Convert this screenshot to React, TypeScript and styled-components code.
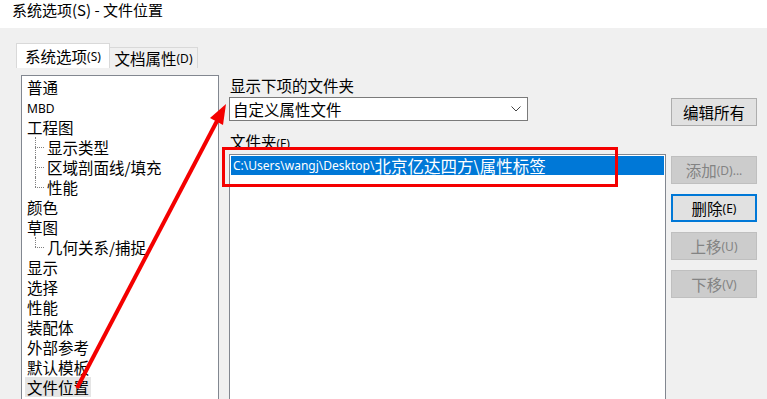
import styled, { createGlobalStyle } from "styled-components";

const GlobalStyle = createGlobalStyle`
  html, body {
    margin: 0;
    padding: 0;
    background: #f0f0f0;
    overflow: hidden;
  }
  body {
    font-family: "Noto Sans CJK SC", "Noto Sans", sans-serif;
    color: #000;
  }
`;

const Window = styled.div`
  position: relative;
  width: 767px;
  height: 399px;
  overflow: hidden;
  background: #f0f0f0;
`;

const TitleBar = styled.div`
  height: 28px;
  background: #fff;
  padding-left: 12px;
  font-size: 15px;
  line-height: 20px;
  box-sizing: border-box;
`;

const Body = styled.div`
  padding: 15px 0 0 16px;
`;

const TabRow = styled.div`
  display: flex;
  align-items: flex-end;
  height: 25px;
`;

const Tab = styled.div<{ $active?: boolean }>`
  box-sizing: border-box;
  height: ${(p) => (p.$active ? 25 : 21)}px;
  width: ${(p) => (p.$active ? 94 : 88)}px;
  background: ${(p) => (p.$active ? "#fff" : "#f0f0f0")};
  border: 1px solid #d9d9d9;
  border-bottom: none;
  ${(p) => !p.$active && "border-left: none;"}
  display: flex;
  align-items: center;
  justify-content: center;
  font-size: 15.5px;
  white-space: nowrap;
`;

const Small = styled.span`
  font-family: "Noto Sans", "Liberation Sans", sans-serif;
  font-size: 12px;
`;

const Content = styled.div`
  display: flex;
  padding-top: 7px;
`;

const TreeBox = styled.div`
  margin-left: 5px;
  width: 198px;
  height: 340px;
  box-sizing: border-box;
  background: #fff;
  border: 1px solid #828790;
  padding-top: 1px;
  display: flex;
  flex-direction: column;
`;

const TreeRow = styled.div<{ $child?: boolean; $last?: boolean }>`
  position: relative;
  height: 20px;
  padding-left: ${(p) => (p.$child ? 23 : 3)}px;
  display: flex;
  align-items: center;
  font-size: 15.5px;
  white-space: nowrap;
  ${(p) =>
    p.$child &&
    `
    &::before {
      content: "";
      position: absolute;
      left: 13px;
      top: 10px;
      width: 9px;
      border-top: 1px dotted #808080;
    }
    &::after {
      content: "";
      position: absolute;
      left: 13px;
      top: 0;
      height: ${p.$last ? 10 : 20}px;
      border-left: 1px dotted #808080;
    }
  `}
`;

const TreeLabel = styled.span<{ $selected?: boolean }>`
  padding: 0 2px;
  line-height: 20px;
  background: ${(p) => (p.$selected ? "#e5e5e5" : "transparent")};
`;

const RightPane = styled.div`
  margin-left: 10px;
  display: flex;
  flex-direction: column;
`;

const Label = styled.div<{ $gap?: number }>`
  height: 20px;
  line-height: 20px;
  font-size: 15.5px;
  padding-left: 1px;
  margin-top: ${(p) => p.$gap ?? 0}px;
  white-space: nowrap;
`;

const Row = styled.div`
  display: flex;
  justify-content: space-between;
  align-items: flex-start;
  width: 528px;
`;

const Select = styled.div`
  margin-top: 2px;
  width: 299px;
  height: 24px;
  box-sizing: border-box;
  background: #fff;
  border: 1px solid #7a7a7a;
  display: flex;
  align-items: center;
  justify-content: space-between;
  padding: 0 6px 0 3px;
  font-size: 15.5px;
`;

const Button = styled.button<{ $disabled?: boolean; $focused?: boolean }>`
  width: 86px;
  height: 28px;
  box-sizing: border-box;
  padding: 0;
  font-family: "Noto Sans CJK SC", "Noto Sans", sans-serif;
  font-size: 15.5px;
  display: flex;
  align-items: center;
  justify-content: center;
  white-space: nowrap;
  background: ${(p) => (p.$disabled ? "#cccccc" : "#e1e1e1")};
  color: ${(p) => (p.$disabled ? "#838383" : "#000")};
  border: ${(p) =>
    p.$focused ? "2px solid #0078d7" : p.$disabled ? "1px solid #bfbfbf" : "1px solid #adadad"};
`;

const EditButton = styled(Button)`
  margin-top: 3px;
`;

const FolderList = styled.div`
  margin-top: 3px;
  width: 437px;
  height: 260px;
  box-sizing: border-box;
  background: #fff;
  border: 1px solid #828790;
  padding: 1px;
`;

const ListItem = styled.div<{ $selected?: boolean }>`
  height: 19px;
  display: flex;
  align-items: center;
  padding-left: 2px;
  font-size: 16.5px;
  white-space: nowrap;
  background: ${(p) => (p.$selected ? "#0078d7" : "transparent")};
  color: ${(p) => (p.$selected ? "#fff" : "#000")};
`;

const ButtonStack = styled.div`
  margin-top: 5px;
  display: flex;
  flex-direction: column;
  gap: 10px;
`;

const Overlay = styled.svg`
  position: absolute;
  left: 0;
  top: 0;
  pointer-events: none;
`;

const tree: { label: string; child?: boolean; last?: boolean; latin?: boolean; selected?: boolean }[] = [
  { label: "普通" },
  { label: "MBD", latin: true },
  { label: "工程图" },
  { label: "显示类型", child: true },
  { label: "区域剖面线/填充", child: true },
  { label: "性能", child: true, last: true },
  { label: "颜色" },
  { label: "草图" },
  { label: "几何关系/捕捉", child: true, last: true },
  { label: "显示" },
  { label: "选择" },
  { label: "性能" },
  { label: "装配体" },
  { label: "外部参考" },
  { label: "默认模板" },
  { label: "文件位置", selected: true },
];

const App = () => {
  return (
    <Window>
      <GlobalStyle />
      <TitleBar>系统选项(S) - 文件位置</TitleBar>
      <Body>
        <TabRow>
          <Tab $active>
            系统选项<Small>(S)</Small>
          </Tab>
          <Tab>
            文档属性<Small>(D)</Small>
          </Tab>
        </TabRow>
        <Content>
          <TreeBox>
            {tree.map((t, i) => (
              <TreeRow key={i} $child={t.child} $last={t.last}>
                <TreeLabel $selected={t.selected}>
                  {t.latin ? <Small>{t.label}</Small> : t.label}
                </TreeLabel>
              </TreeRow>
            ))}
          </TreeBox>
          <RightPane>
            <Label>显示下项的文件夹</Label>
            <Row>
              <Select>
                <span>自定义属性文件</span>
                <svg width="10" height="6" viewBox="0 0 10 6">
                  <polyline points="0.5,0.5 5,5 9.5,0.5" fill="none" stroke="#444" strokeWidth="1" />
                </svg>
              </Select>
              <EditButton>编辑所有</EditButton>
            </Row>
            <Label $gap={5}>
              文件夹<Small>(F)</Small>
            </Label>
            <Row>
              <FolderList>
                <ListItem $selected>
                  <Small>C:\Users\wangj\Desktop\</Small>北京亿达四方\属性标签
                </ListItem>
              </FolderList>
              <ButtonStack>
                <Button $disabled>
                  添加<Small>(D)...</Small>
                </Button>
                <Button $focused>
                  删除<Small>(E)</Small>
                </Button>
                <Button $disabled>
                  上移<Small>(U)</Small>
                </Button>
                <Button $disabled>
                  下移<Small>(V)</Small>
                </Button>
              </ButtonStack>
            </Row>
          </RightPane>
        </Content>
      </Body>
      <Overlay width="767" height="399" viewBox="0 0 767 399">
        <rect x="223.5" y="148.5" width="393" height="37" fill="none" stroke="#f40000" strokeWidth="3" />
        <line x1="77" y1="388" x2="217" y2="121" stroke="#f40000" strokeWidth="4" />
        <polygon points="226,104 223,125 210,118" fill="#f40000" />
      </Overlay>
    </Window>
  );
};

export default App;
